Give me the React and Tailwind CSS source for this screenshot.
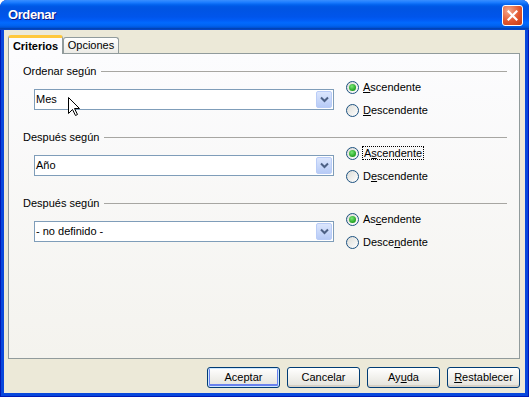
import React from "react";

const Chevron = () => (
  <svg width="9" height="7" viewBox="0 0 9 7">
    <path d="M1 1.5 L4.5 5 L8 1.5" fill="none" stroke="#4D6185" strokeWidth="2" />
  </svg>
);

function Combo({ value }) {
  return (
    <div className="w-[300px] h-[21px] border border-[#7F9DB9] bg-white flex items-center mt-[11px]">
      <span className="flex-1 pl-[1px] text-[11px] leading-none">{value}</span>
      <div className="w-[16px] h-[17px] mr-[1px] rounded-[2px] border border-[#B9CCF7] bg-gradient-to-b from-[#DCE6FD] to-[#B7CBF6] flex items-center justify-center">
        <Chevron />
      </div>
    </div>
  );
}

function Radio({ checked, children, focus }) {
  return (
    <div className="h-[18px] flex items-center">
      <div className="w-[13px] h-[13px] rounded-full border border-[#1C5180] bg-gradient-to-br from-[#DCDCD7] to-white flex items-center justify-center">
        {checked && (
          <div className="w-[7px] h-[7px] rounded-full bg-[radial-gradient(circle_at_40%_35%,#7AE876,#21A121_70%)]" />
        )}
      </div>
      <span
        className={
          focus
            ? "ml-[3px] px-[1px] border border-dotted border-black leading-[12px] text-[11px]"
            : "ml-[4px] text-[11px] leading-none"
        }
      >
        {children}
      </span>
    </div>
  );
}

function Group({ title, value, asc, desc, focus }) {
  return (
    <div>
      <div className="h-[14px] flex items-center">
        <span className="text-[11px] leading-none">{title}</span>
        <div className="flex-1 h-px bg-[#A7A6A2] ml-[5px]" />
      </div>
      <div className="flex items-start ml-[11px] h-[41px]">
        <Combo value={value} />
        <div className="ml-[12px] flex flex-col gap-[5px]">
          <Radio checked focus={focus}>{asc}</Radio>
          <Radio>{desc}</Radio>
        </div>
      </div>
    </div>
  );
}

function Btn({ children, def }) {
  return (
    <button
      className={
        "w-[73px] h-[21px] rounded-[3px] border border-[#003C74] bg-gradient-to-b from-white to-[#E3E2DA] text-[11px] leading-none text-black " +
        (def ? "shadow-[inset_0_0_0_1px_#CEE7FF,inset_0_-1px_0_2px_#6982EE]" : "shadow-[inset_0_-2px_0_0_#D6D0C5]")
      }
    >
      {children}
    </button>
  );
}

export default function App() {
  return (
    <div className="w-[529px] h-[397px] bg-white font-['Liberation_Sans',Arial,sans-serif] text-black relative">
      <div className="w-full h-full flex flex-col rounded-t-[7px] bg-[#0847DC] border-x border-b border-[#0019B5]">
        {/* title bar */}
        <div className="h-[30px] -mx-px rounded-t-[7px] bg-[linear-gradient(to_bottom,#3A8EFF_0%,#1C7CFF_8%,#0262EE_16%,#0057E5_22%,#0054E3_30%,#0055EB_56%,#005BF5_66%,#026AFE_76%,#0062EF_86%,#0052D6_92%,#0040AB_96%,#0848D8_100%)] flex items-center justify-between pl-[8px] pr-[6px]">
          <span className="text-white font-bold text-[13px] tracking-[-0.4px] [text-shadow:1px_1px_#0A1883]">Ordenar</span>
          <div className="w-[21px] h-[21px] rounded-[3px] border border-white bg-[radial-gradient(circle_at_30%_25%,#F3A98E,#E2572F_55%,#C73A12)] flex items-center justify-center">
            <svg width="11" height="11" viewBox="0 0 11 11">
              <path d="M1.5 1.5 L9.5 9.5 M9.5 1.5 L1.5 9.5" stroke="white" strokeWidth="2.2" strokeLinecap="square" />
            </svg>
          </div>
        </div>

        {/* body */}
        <div className="flex-1 mx-[3px] mb-[3px] bg-[#ECE9D8] flex flex-col px-[4px] pt-[5px]">
          {/* tabs */}
          <div className="flex items-end h-[18px]">
            <div className="h-[19px] relative top-[1px] z-10 w-[55px] rounded-t-[3px] border-x border-[#919B9C] border-t-[3px] border-t-[#FFC83C] bg-[#FCFCFE] flex items-center justify-center">
              <span className="text-[11px] font-bold leading-none">Criterios</span>
            </div>
            <div className="h-[16px] w-[56px] rounded-t-[3px] border border-b-0 border-[#919B9C] bg-gradient-to-b from-white to-[#ECEBE6] flex items-center justify-center">
              <span className="text-[11px] leading-none">Opciones</span>
            </div>
          </div>

          {/* panel */}
          <div className="w-[512px] h-[306px] border border-[#919B9C] bg-gradient-to-b from-[#FCFCFE] to-[#F4F3EE] pl-[14px] pr-[12px] pt-[10px] flex flex-col gap-[11px]">
            <Group
              title="Ordenar según"
              value="Mes"
              asc={<><u>A</u>scendente</>}
              desc={<><u>D</u>escendente</>}
            />
            <Group
              title="Después según"
              value="Año"
              asc={<>A<u>s</u>cendente</>}
              desc={<>D<u>e</u>scendente</>}
              focus
            />
            <Group
              title="Después según"
              value="- no definido -"
              asc={<>As<u>c</u>endente</>}
              desc={<>Desce<u>n</u>dente</>}
            />
          </div>

          {/* buttons */}
          <div className="flex justify-end gap-[7px] mt-[8px] mr-[1px]">
            <Btn def>Aceptar</Btn>
            <Btn>Cancelar</Btn>
            <Btn>Ay<u>u</u>da</Btn>
            <Btn><u>R</u>establecer</Btn>
          </div>
        </div>
      </div>

      {/* mouse cursor */}
      <svg className="absolute left-[68px] top-[97px]" width="13" height="20" viewBox="0 0 13 20">
        <path d="M0.5 0.5 L0.5 16.5 L4.5 12.5 L7.5 18.5 L9.5 17.5 L6.5 11.5 L11.5 11.5 Z" fill="white" stroke="black" strokeWidth="1" strokeLinejoin="miter" />
      </svg>
    </div>
  );
}
